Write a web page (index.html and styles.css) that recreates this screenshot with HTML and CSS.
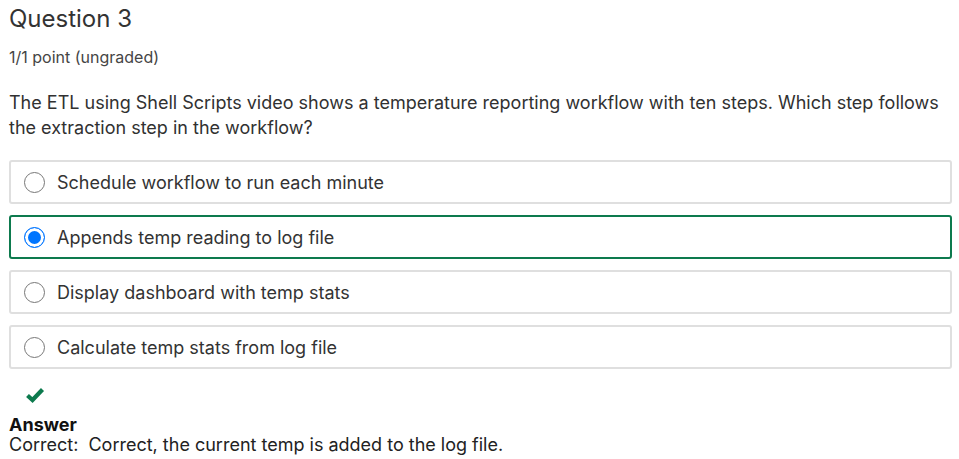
FILE: index.html
```html
<!DOCTYPE html>
<html lang="en">
<head>
<meta charset="utf-8">
<title>Question 3</title>
<link rel="stylesheet" href="styles.css">
</head>
<body>
<div class="wrap">
  <h1 class="title">Question 3</h1>
  <div class="points">1/1 point (ungraded)</div>
  <p class="question">The ETL using Shell Scripts video shows a temperature reporting workflow with ten steps. Which step follows the extraction step in the workflow?</p>
  <div class="options">
    <label class="option"><input type="radio" name="q3" class="radio"><span>Schedule workflow to run each minute</span></label>
    <label class="option option-correct"><input type="radio" name="q3" class="radio" checked><span>Appends temp reading to log file</span></label>
    <label class="option"><input type="radio" name="q3" class="radio"><span>Display dashboard with temp stats</span></label>
    <label class="option"><input type="radio" name="q3" class="radio"><span>Calculate temp stats from log file</span></label>
  </div>
  <svg class="check" width="20" height="16" viewBox="0 0 20 16" aria-hidden="true">
    <path d="M2.5 8.5 L7.5 13 L17.5 2.5" fill="none" stroke="#0d7a4e" stroke-width="4.2" stroke-linejoin="miter"/>
  </svg>
  <div class="answer">
    <div class="answer-label">Answer</div>
    <div class="answer-text">Correct:&nbsp; Correct, the current temp is added to the log file.</div>
  </div>
</div>
</body>
</html>
```

FILE: styles.css
```css
html, body {
  margin: 0;
  padding: 0;
  background: #fff;
}
body {
  font-family: Inter, "Noto Sans", "Liberation Sans", sans-serif;
  color: #313131;
}
.wrap {
  padding: 4px 7px 0 9px;
}
.title {
  margin: 0;
  font-size: 24px;
  line-height: 29px;
  font-weight: 400;
  color: #333;
}
.points {
  margin-top: 14px;
  font-size: 16px;
  line-height: 20px;
  color: #454545;
}
.question {
  margin: 23px 0 0;
  font-size: 18px;
  line-height: 25px;
  color: #313131;
}
.options {
  margin-top: 20px;
  display: flex;
  flex-direction: column;
  gap: 11px;
}
.option {
  box-sizing: border-box;
  height: 44px;
  display: flex;
  align-items: center;
  gap: 12px;
  padding: 0 13px;
  border: 2px solid #dfdfdf;
  border-radius: 3px;
  font-size: 18px;
  color: #333;
}
.option-correct {
  border-color: #0d7a4e;
}
.radio {
  appearance: none;
  -webkit-appearance: none;
  margin: 0;
  width: 21px;
  height: 21px;
  flex: none;
  box-sizing: border-box;
  border-radius: 50%;
  border: 1px solid #777;
  background: #fff;
}
.radio:checked {
  border: 1.5px solid #0075ff;
  background: #0075ff;
  box-shadow: inset 0 0 0 3px #fff;
}
.check {
  display: block;
  margin: 18px 0 0 16px;
}
.answer {
  margin-top: 12px;
  font-size: 18px;
  line-height: 20px;
  color: #222;
}
.answer-label {
  font-weight: 700;
  color: #111;
}
```
